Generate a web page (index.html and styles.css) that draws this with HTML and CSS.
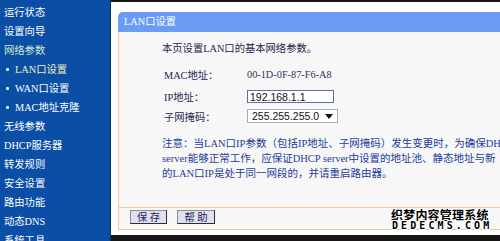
FILE: index.html
```html
<!DOCTYPE html>
<html lang="zh-CN">
<head>
<meta charset="utf-8">
<title>LAN口设置</title>
<link rel="stylesheet" href="styles.css">
</head>
<body>
<div class="page">
  <nav class="sidebar">
    <div class="nav-item">运行状态</div>
    <div class="nav-item">设置向导</div>
    <div class="nav-item nav-open">网络参数</div>
    <div class="nav-item nav-sub nav-current"><span class="dot"></span>LAN口设置</div>
    <div class="nav-item nav-sub"><span class="dot"></span>WAN口设置</div>
    <div class="nav-item nav-sub"><span class="dot"></span>MAC地址克隆</div>
    <div class="nav-item">无线参数</div>
    <div class="nav-item">DHCP服务器</div>
    <div class="nav-item">转发规则</div>
    <div class="nav-item">安全设置</div>
    <div class="nav-item">路由功能</div>
    <div class="nav-item">动态DNS</div>
    <div class="nav-item">系统工具</div>
  </nav>
  <main class="main">
    <section class="panel">
      <div class="panel-head">LAN口设置</div>
      <div class="panel-body">
        <p class="intro">本页设置LAN口的基本网络参数。</p>
        <div class="form">
          <div class="row row-mac">
            <span class="label">MAC地址：</span>
            <span class="value">00-1D-0F-87-F6-A8</span>
          </div>
          <div class="row row-ip">
            <span class="label">IP地址：</span>
            <input class="text-input" type="text" value="192.168.1.1">
          </div>
          <div class="row row-mask">
            <span class="label">子网掩码：</span>
            <div class="select">
              <span class="select-text">255.255.255.0</span>
              <svg class="select-arrow" width="8" height="5" viewBox="0 0 8 5"><path d="M0 0H8L4 5Z" fill="#111"/></svg>
            </div>
          </div>
        </div>
        <div class="note">
          <div class="note-line">注意：当LAN口IP参数（包括IP地址、子网掩码）发生变更时，为确保DHCP</div>
          <div class="note-line">server能够正常工作，应保证DHCP server中设置的地址池、静态地址与新</div>
          <div class="note-line">的LAN口IP是处于同一网段的，并请重启路由器。</div>
        </div>
      </div>
      <div class="panel-foot">
        <button class="btn" type="button">保 存</button>
        <button class="btn" type="button">帮 助</button>
      </div>
    </section>
    <div class="watermark">
      <div class="wm-cn">织梦内容管理系统</div>
      <div class="wm-en">DEDECMS.COM</div>
    </div>
  </main>
</div>
</body>
</html>
```

FILE: styles.css
```css
html, body {
  margin: 0;
  padding: 0;
  background: #ffffff;
}

body {
  width: 500px;
  height: 241px;
  overflow: hidden;
  font-family: "Liberation Serif", "Noto Sans CJK SC", serif;
  font-size: 10.3px;
}

.page {
  display: flex;
  width: 500px;
  height: 241px;
}

/* ---------- sidebar ---------- */
.sidebar {
  width: 111px;
  flex: none;
  box-sizing: border-box;
  background: #0b4ea6;
  border-right: 1px solid #06306e;
  padding-top: 3px;
  overflow: hidden;
}

.nav-item {
  height: 19px;
  line-height: 19px;
  padding-left: 4px;
  color: #ffffff;
  white-space: nowrap;
  display: flex;
  align-items: center;
}

.nav-open {
  color: #cfe9c6;
}

.nav-sub {
  padding-left: 6px;
}

.nav-current {
  color: #f2f0b8;
}

.dot {
  width: 3px;
  height: 3px;
  background: #d8f0d0;
  border-radius: 1px;
  margin-right: 6px;
  flex: none;
}

/* ---------- main ---------- */
.main {
  position: relative;
  flex: 1;
  box-sizing: border-box;
  height: 241px;
  background: #ffffff;
  border-top: 2px solid #161616;
  border-bottom: 6px solid #161616;
  padding: 10px 0 0 7px;
  overflow: hidden;
}

.panel {
  width: 430px;
  display: flex;
  flex-direction: column;
}

.panel-head {
  height: 20px;
  line-height: 20px;
  background: #6b9bf4;
  color: #ffffff;
  padding-left: 6px;
  border-radius: 5px 5px 0 0;
}

.panel-body {
  height: 175px;
  box-sizing: border-box;
  background: #f7f7f7;
  border-left: 1px solid #f0cb92;
  padding: 9px 0 0 43px;
  color: #1c2550;
}

.intro {
  margin: 0;
  line-height: 15px;
  white-space: nowrap;
}

.form {
  margin-top: 8px;
  display: flex;
  flex-direction: column;
}

.row {
  display: flex;
  align-items: center;
}

.row-mac { height: 20px; }
.row-ip { height: 25px; }
.row-mask { height: 14px; }

.label {
  width: 83px;
  padding-left: 2px;
  flex: none;
}

.value {
  color: #2a3560;
}

.text-input {
  box-sizing: border-box;
  width: 87px;
  height: 13px;
  margin: 0;
  padding: 0 0 0 2px;
  border: 1px solid #5d6f9c;
  background: #ffffff;
  font-family: "Liberation Sans", sans-serif;
  font-size: 10.5px;
  line-height: 11px;
  color: #111111;
}

.select {
  box-sizing: border-box;
  width: 91px;
  height: 14px;
  border: 1px solid #a7adb6;
  background: #ffffff;
  display: flex;
  align-items: center;
  justify-content: space-between;
  padding: 0 4px 0 4px;
  font-family: "Liberation Sans", sans-serif;
  font-size: 10.5px;
  color: #111111;
}

.select-arrow {
  flex: none;
}

.note {
  margin-top: 13px;
  color: #1d3c9a;
  line-height: 15px;
  font-size: 10.5px;
}

.note-line {
  white-space: nowrap;
}

.panel-foot {
  background: #f7f7f7;
  border-top: 1px solid #f0cb92;
  border-bottom: 1px solid #f0cb92;
  border-left: 1px solid #f0cb92;
  display: flex;
  align-items: flex-start;
  gap: 10px;
  padding: 2px 0 0 11px;
  height: 19px;
}

.btn {
  box-sizing: border-box;
  height: 14px;
  width: 37px;
  margin: 0;
  padding: 0;
  background: #dfe2ee;
  border: 1px solid;
  border-color: #8a8a9a #2c2c3c #2c2c3c #8a8a9a;
  font-family: "Noto Sans CJK SC", sans-serif;
  font-size: 10.3px;
  line-height: 12px;
  color: #1a2660;
}

.btn + .btn {
  width: 38px;
}

/* ---------- watermark overlay ---------- */
.watermark {
  position: absolute;
  left: 280px;
  top: 206px;
  width: 100px;
  color: #000000;
  text-shadow: -1px -1px 0 #fff, 1px -1px 0 #fff, -1px 1px 0 #fff, 1px 1px 0 #fff, 0 1px 0 #fff, 0 -1px 0 #fff, 1px 0 0 #fff, -1px 0 0 #fff;
}

.wm-cn {
  font-family: "Noto Sans CJK SC", sans-serif;
  font-weight: 700;
  font-size: 12px;
  line-height: 13px;
  letter-spacing: 0.2px;
  white-space: nowrap;
}

.wm-en {
  font-family: "DejaVu Sans Mono", monospace;
  font-weight: 700;
  font-size: 10px;
  line-height: 10px;
  letter-spacing: 3.1px;
  padding-left: 1px;
  white-space: nowrap;
}
```
